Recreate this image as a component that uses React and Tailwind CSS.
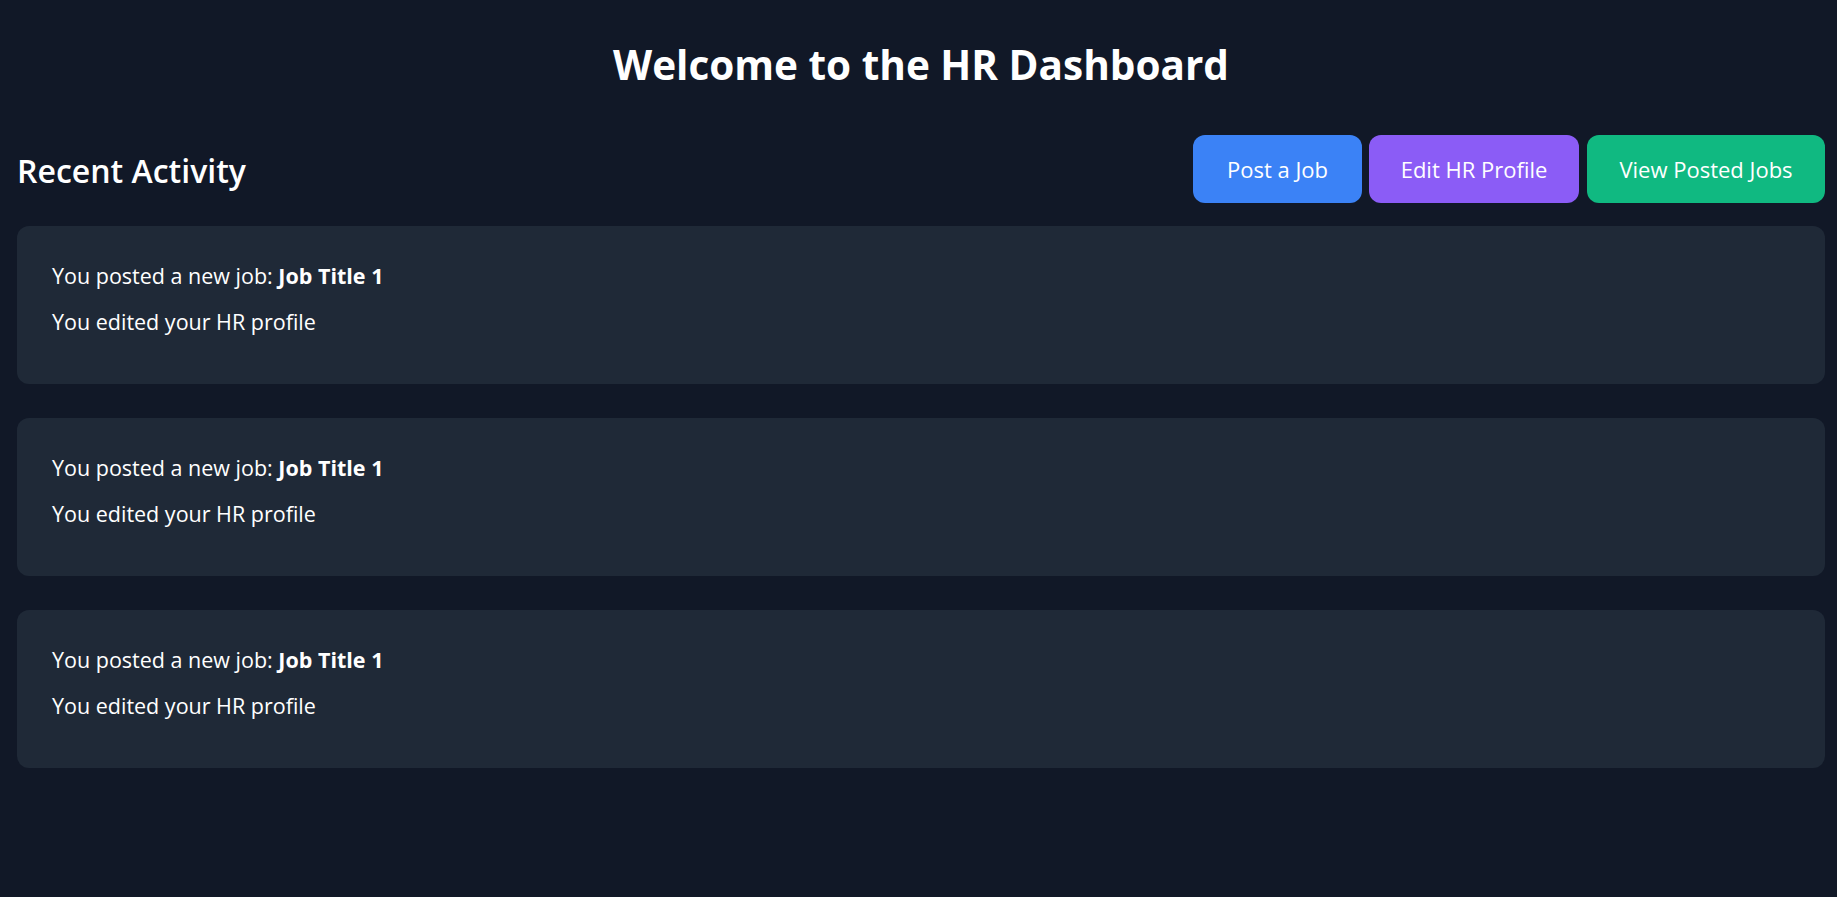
import React from "react";

const activities = [1, 2, 3];

function App() {
  return (
    <div
      className="min-h-screen bg-[#111827] text-white pl-[17px] pr-[12px]"
      style={{ fontFamily: '"Open Sans", "Noto Sans", sans-serif' }}
    >
      {/* Page title */}
      <h1 className="pt-[35px] text-center text-[40.5px] leading-[60px] font-bold">
        Welcome to the HR Dashboard
      </h1>

      {/* Header row */}
      <div className="mt-[40px] flex items-center justify-between">
        <h2 className="pt-[4px] text-[32px] leading-[40px] font-semibold">Recent Activity</h2>
        <div className="flex">
          <button className="w-[169px] h-[68px] rounded-xl bg-[#3b82f6] text-[22px] text-white">
            Post a Job
          </button>
          <button className="ml-[7px] w-[210px] h-[68px] rounded-xl bg-[#8b5cf6] text-[22px] text-white">
            Edit HR Profile
          </button>
          <button className="ml-[8px] w-[238px] h-[68px] rounded-xl bg-[#10b981] text-[22px] text-white">
            View Posted Jobs
          </button>
        </div>
      </div>

      {/* Activity cards */}
      <div className="mt-[23px] flex flex-col gap-[34px]">
        {activities.map((a) => (
          <div key={a} className="h-[158px] rounded-xl bg-[#1f2937] px-[35px] pt-[35px]">
            <p className="text-[21.5px] leading-[30px]">
              You posted a new job: <strong className="font-bold">Job Title 1</strong>
            </p>
            <p className="mt-[16px] text-[21.5px] leading-[30px]">You edited your HR profile</p>
          </div>
        ))}
      </div>
    </div>
  );
}

export default App;
